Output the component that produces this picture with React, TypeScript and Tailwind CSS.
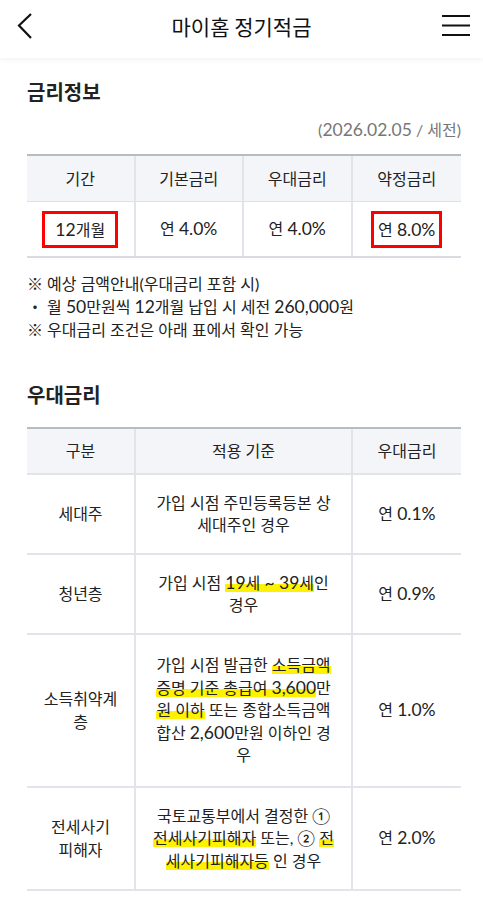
import React from 'react'

const hl = 'bg-[linear-gradient(transparent_58%,#fff200_58%)]'

// digits render a touch larger than the hangul in the original
const N = ({ children }: { children: React.ReactNode }) => <span className="text-[17.5px]">{children}</span>

const rateCols = ['기간', '기본금리', '우대금리', '약정금리']

const prefRows: { name: React.ReactNode; desc: React.ReactNode; rate: string; h: string }[] = [
  {
    name: '세대주',
    desc: (
      <>
        가입 시점 주민등록등본 상<br />세대주인 경우
      </>
    ),
    rate: '0.1%',
    h: 'h-[80px]',
  },
  {
    name: '청년층',
    desc: (
      <>
        가입 시점 <span className={hl}><N>19</N>세 <N>~ 39</N>세</span>인<br />경우
      </>
    ),
    rate: '0.9%',
    h: 'h-[80px]',
  },
  {
    name: (
      <>
        소득취약계<br />층
      </>
    ),
    desc: (
      <>
        가입 시점 발급한 <span className={hl}>소득금액</span>
        <br />
        <span className={hl}>증명 기준 총급여 <N>3,600</N></span>만
        <br />
        <span className={hl}>원 이하</span> 또는 종합소득금액
        <br />
        합산 <N>2,600</N>만원 이하인 경<br />우
      </>
    ),
    rate: '1.0%',
    h: 'h-[153px]',
  },
  {
    name: (
      <>
        전세사기<br />피해자
      </>
    ),
    desc: (
      <>
        국토교통부에서 결정한 ①<br />
        <span className={hl}>전세사기피해자</span> 또는, ② <span className={hl}>전</span>
        <br />
        <span className={hl}>세사기피해자등</span> 인 경우
      </>
    ),
    rate: '2.0%',
    h: 'h-[103px]',
  },
]

export default function App() {
  return (
    <div className="w-[483px] min-h-[914px] bg-white text-[#222] font-['Lato','Noto_Sans_CJK_KR',sans-serif]">
      {/* header */}
      <div className="h-[58px] flex items-center justify-between px-[13px] pb-[6px] bg-white shadow-[0_2px_5px_rgba(0,0,0,0.05)]">
        <div className="w-[44px]">
          <svg className="ml-[4px]" width="16" height="26" viewBox="0 0 16 26" fill="none" stroke="#111" strokeWidth="2.2">
            <path d="M14 1 L2 12.5 L14 25" />
          </svg>
        </div>
        <div className="text-[21px] leading-[30px] text-[#111] font-['Noto_Sans_CJK_KR',sans-serif]">마이홈 정기적금</div>
        <div className="w-[44px] flex justify-end">
          <svg width="28" height="22" viewBox="0 0 28 22" fill="none" stroke="#111" strokeWidth="2.2">
            <path d="M0 1h28M0 10.5h28M0 20h28" />
          </svg>
        </div>
      </div>

      <div className="pl-[27px] pr-[22px]">
        <h2 className="mt-[20px] text-[20px] leading-[28px] font-bold font-['Noto_Sans_CJK_KR',sans-serif]">금리정보</h2>
        <div className="mt-[13px] text-right text-[16px] leading-[22px] text-[#777]">
          (<N>2026.02.05</N> / 세전)
        </div>

        {/* rate table */}
        <div className="mt-[13px] border-t-2 border-[#b7bbc2] text-[16px]">
          <div className="grid grid-cols-4 bg-[#f4f5f9] border-b border-[#dfe1e6] h-[46px]">
            {rateCols.map((c, i) => (
              <div key={c} className={`flex items-center justify-center ${i < 3 ? 'border-r-2 border-[#e2e4e9]' : ''}`}>
                {c}
              </div>
            ))}
          </div>
          <div className="grid grid-cols-4 border-b-2 border-[#d8dbe0] h-[56px]">
            <div className="flex items-center justify-center border-r-2 border-[#e2e4e9]">
              <span className="border-[3px] border-[#ff0000] px-[10px] py-[4px] leading-[23px]">
                <N>12</N>개월
              </span>
            </div>
            <div className="flex items-center justify-center border-r-2 border-[#e2e4e9]">
              연&nbsp;<N>4.0%</N>
            </div>
            <div className="flex items-center justify-center border-r-2 border-[#e2e4e9]">
              연&nbsp;<N>4.0%</N>
            </div>
            <div className="flex items-center justify-center">
              <span className="border-[3px] border-[#ff0000] px-[4px] py-[4px] leading-[23px]">
                연 <N>8.0%</N>
              </span>
            </div>
          </div>
        </div>

        {/* notes */}
        <div className="mt-[14px] text-[16px] leading-[23px]">
          <p>※ 예상 금액안내(우대금리 포함 시)</p>
          <p>
            ・ 월 <N>50</N>만원씩 <N>12</N>개월 납입 시 세전 <N>260,000</N>원
          </p>
          <p>※ 우대금리 조건은 아래 표에서 확인 가능</p>
        </div>

        <h2 className="mt-[40px] text-[20px] leading-[28px] font-bold font-['Noto_Sans_CJK_KR',sans-serif]">우대금리</h2>

        {/* preference table */}
        <div className="mt-[18px] border-t-2 border-[#b7bbc2] text-[16px] leading-[22.5px]">
          <div className="grid grid-cols-[109px_217px_1fr] bg-[#f4f5f9] border-b-2 border-[#e2e4e9] h-[46px]">
            <div className="flex items-center justify-center border-r-2 border-[#e2e4e9]">구분</div>
            <div className="flex items-center justify-center border-r-2 border-[#e2e4e9]">적용 기준</div>
            <div className="flex items-center justify-center">우대금리</div>
          </div>
          {prefRows.map((r) => (
            <div key={r.rate} className={`grid grid-cols-[109px_217px_1fr] border-b-2 border-[#e2e4e9] ${r.h}`}>
              <div className="flex items-center justify-center text-center border-r-2 border-[#e2e4e9]">
                <p className="whitespace-nowrap">{r.name}</p>
              </div>
              <div className="flex items-center justify-center text-center border-r-2 border-[#e2e4e9]">
                <p className="whitespace-nowrap">{r.desc}</p>
              </div>
              <div className="flex items-center justify-center">
                연&nbsp;<N>{r.rate}</N>
              </div>
            </div>
          ))}
        </div>
      </div>
    </div>
  )
}
